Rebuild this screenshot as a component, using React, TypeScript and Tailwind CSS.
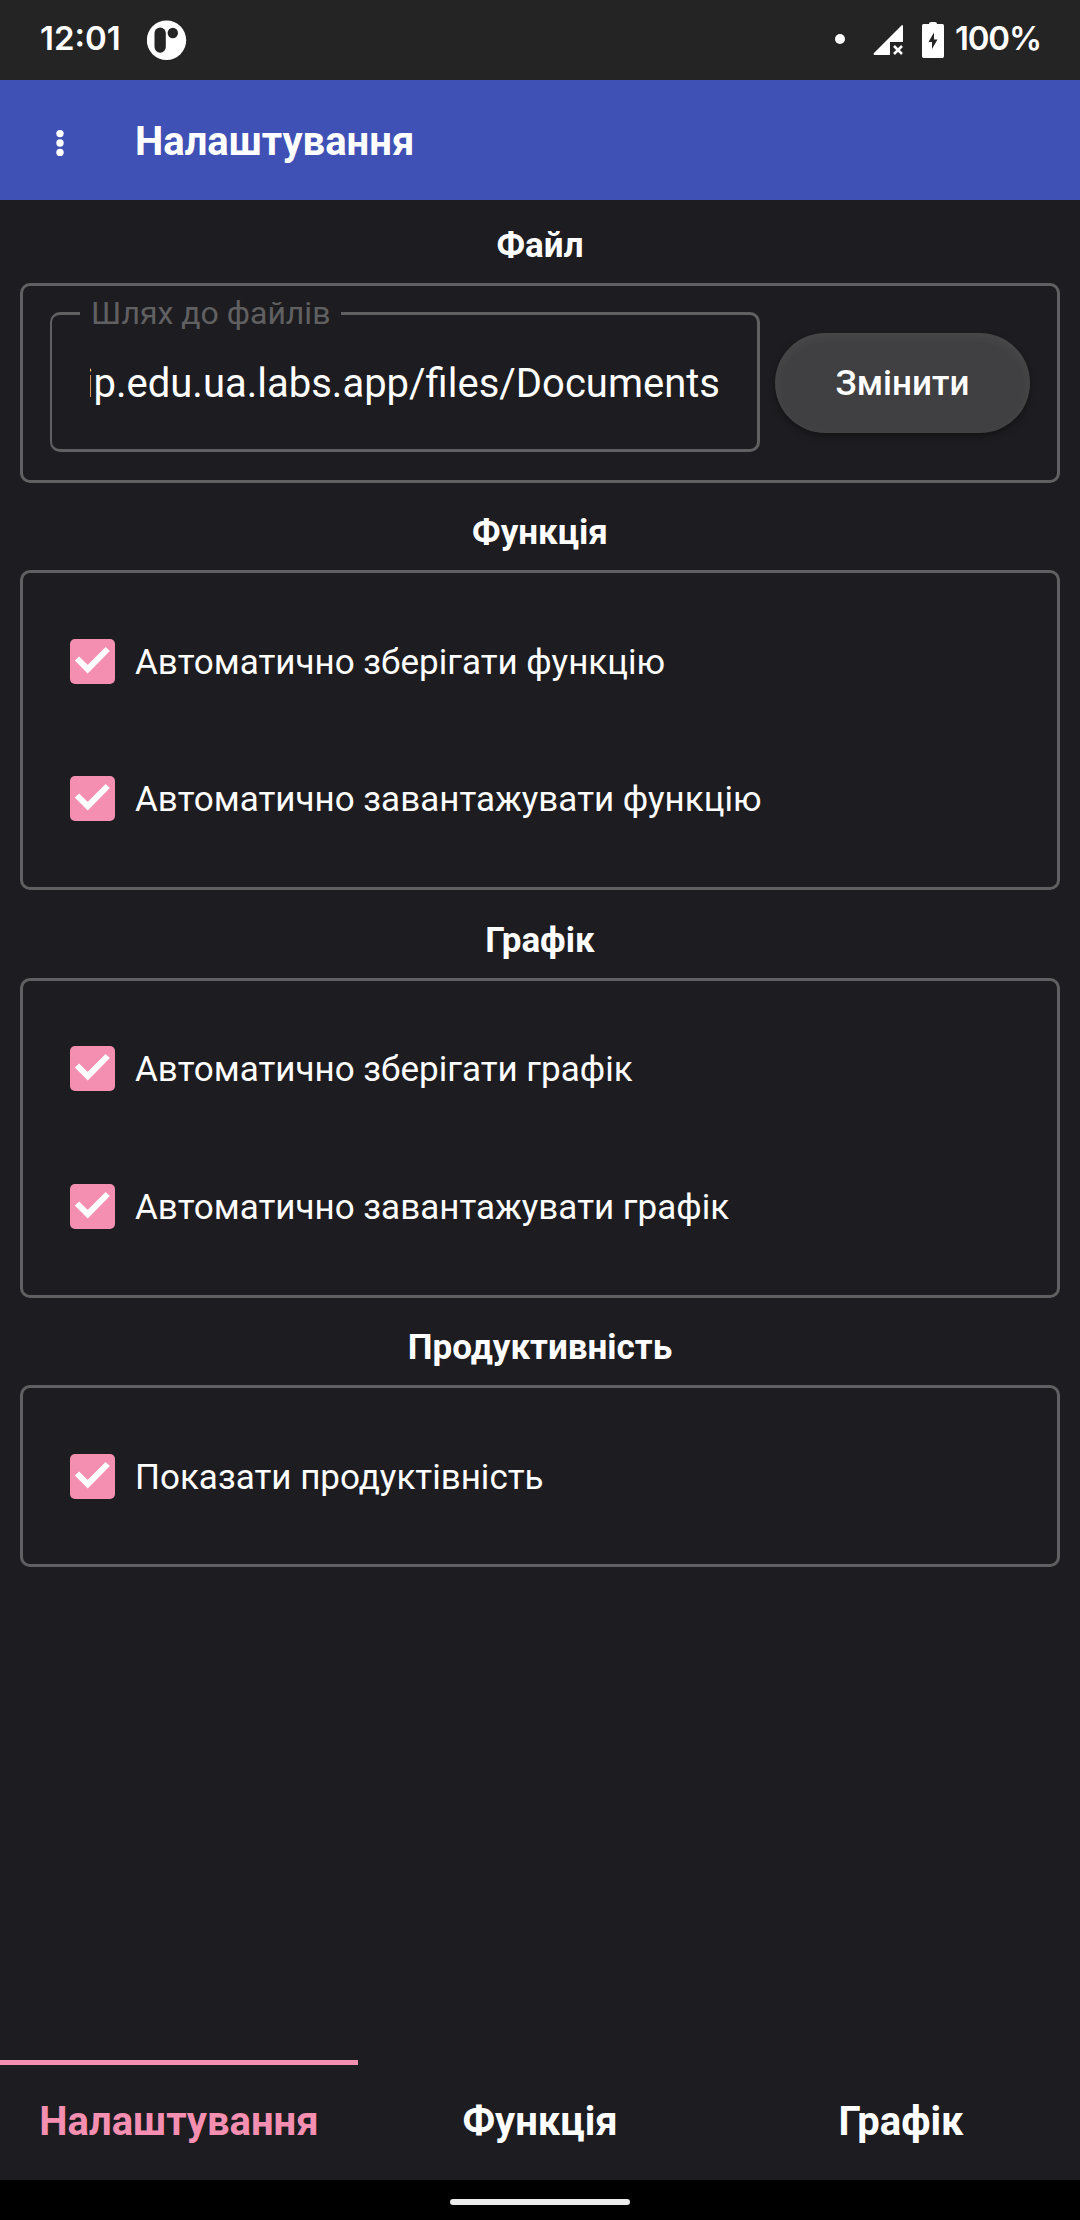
import React from "react";

function StatusBar() {
  return (
    <div className="flex h-20 items-center bg-[#242424] px-10 text-white">
      <span className="mb-[2px] w-[107px] whitespace-nowrap font-['Inter',sans-serif] text-[33px] font-semibold">12:01</span>
      <svg className="h-10 w-10" viewBox="0 0 40 40">
        <circle cx="19.500" cy="20.200" r="19.700" fill="#fff" />
        <rect x="7.500" y="7.500" width="11.300" height="25.200" rx="5.600" fill="#242424" />
        <circle cx="25.800" cy="13" r="5.200" fill="#242424" />
      </svg>
      <span className="mb-[2px] ml-auto mr-[28px] h-[10px] w-[10px] rounded-full bg-white" />
      <svg className="mr-[19px] h-[30px] w-[30px]" viewBox="0 0 30 30">
        <path d="M29 0 Q30 0 30 1 V17 H17 V30 H1 Q0 29 1 28 Z" fill="#fff" />
        <path d="M21 21 L29 29 M29 21 L21 29" stroke="#fff" strokeWidth="2.500" />
      </svg>
      <svg className="h-9 w-[22px]" viewBox="0 0 22 36">
        <path d="M7 2 Q7 0 9 0 H13 Q15 0 15 2 H20.500 Q22 2 22 4 V34 Q22 36 20.500 36 H1.500 Q0 36 0 34 V4 Q0 2 1.500 2 Z" fill="#fff" />
        <path d="M12 10.500 L6.500 20 H10 V27 L15.500 17.500 H12 Z" fill="#242424" />
      </svg>
      <span className="mb-[2px] ml-[11px] w-[85px] whitespace-nowrap font-['Inter',sans-serif] text-[33px] font-semibold tracking-[-1.2px]">100%</span>
    </div>
  );
}

function Checkbox({ label }: { label: string }) {
  return (
    <label className="flex h-[137.5px] items-center">
      <svg className="ml-[47px] h-[45px] w-[45px] shrink-0" viewBox="0 0 45 45">
        <rect width="45" height="45" rx="5" fill="#f48fb1" />
        <path d="M7 19.500 L17.700 30.200 L37.700 10" fill="none" stroke="#fff" strokeWidth="6" />
      </svg>
      <span className="ml-5 pt-[3px] text-[35px]">{label}</span>
    </label>
  );
}

function Section({ title, children, className }: { title: string; children: React.ReactNode; className: string }) {
  return (
    <section>
      <h2 className="flex h-[82.5px] items-center justify-center pt-[9px] text-[35px] font-bold">{title}</h2>
      <div className={`rounded-[10px] border-3 border-[#606062] ${className}`}>{children}</div>
    </section>
  );
}

export default function App() {
  return (
    <div className="flex h-[2220px] w-[1080px] flex-col bg-[#1d1c20] font-['Roboto',sans-serif] text-white">
      <StatusBar />
      <header className="flex h-[120px] items-center bg-[#3f51b5]">
        <svg className="ml-[56px] mt-[6px] h-[28px] w-2" viewBox="0 0 8 28">
          <circle cx="4" cy="4.600" r="3.700" fill="#fff" />
          <circle cx="4" cy="14" r="3.700" fill="#fff" />
          <circle cx="4" cy="23.400" r="3.700" fill="#fff" />
        </svg>
        <h1 className="ml-[71px] mt-[3px] text-[40px] font-bold">Налаштування</h1>
      </header>
      <main className="flex flex-1 flex-col gap-[5px] px-5">
        <Section title="Файл" className="flex h-[200px] pl-[27px] pt-[10px]">
          <fieldset className="h-[156px] w-[710px] min-w-0 shrink-0 rounded-[10px] border-3 border-l-2 border-[#606062] pl-[37.5px] pr-[37px]">
            <legend className="-ml-[9.5px] px-[11px] pb-[2px] text-[32px] leading-[34px] text-[#606062]">Шлях до файлів</legend>
            <div className="flex h-[100px] items-center justify-end overflow-hidden whitespace-nowrap pt-[5px] text-[40px]">ip.edu.ua.labs.app/files/Documents</div>
          </fieldset>
          <button className="ml-[15px] mt-[37px] h-[100px] w-[255px] shrink-0 rounded-full bg-[#404042] pt-[3px] text-[35px] font-medium shadow-[0_3px_6px_rgba(0,0,0,0.35),inset_0_4px_12px_rgba(255,255,255,0.05)]">Змінити</button>
        </Section>
        <Section title="Функція" className="h-[320px] pt-[19.5px]">
          <Checkbox label="Автоматично зберігати функцію" />
          <Checkbox label="Автоматично завантажувати функцію" />
        </Section>
        <Section title="Графік" className="h-[320px] pt-[19.5px]">
          <Checkbox label="Автоматично зберігати графік" />
          <Checkbox label="Автоматично завантажувати графік" />
        </Section>
        <Section title="Продуктивність" className="h-[182px] pt-[19.5px]">
          <Checkbox label="Показати продуктівність" />
        </Section>
      </main>
      <nav className="flex h-[120px] text-[40px] font-bold">
        <a className="flex w-[358px] items-center justify-center border-t-5 border-[#f48fb1] pb-[2px] text-[#f48fb1]">Налаштування</a>
        <a className="flex w-[364px] items-center justify-center pt-[3px]">Функція</a>
        <a className="flex w-[358px] items-center justify-center pt-[3px]">Графік</a>
      </nav>
      <div className="flex h-10 items-center justify-center bg-black pt-1">
        <div className="h-[6px] w-[180px] rounded-full bg-[#ececec]" />
      </div>
    </div>
  );
}
